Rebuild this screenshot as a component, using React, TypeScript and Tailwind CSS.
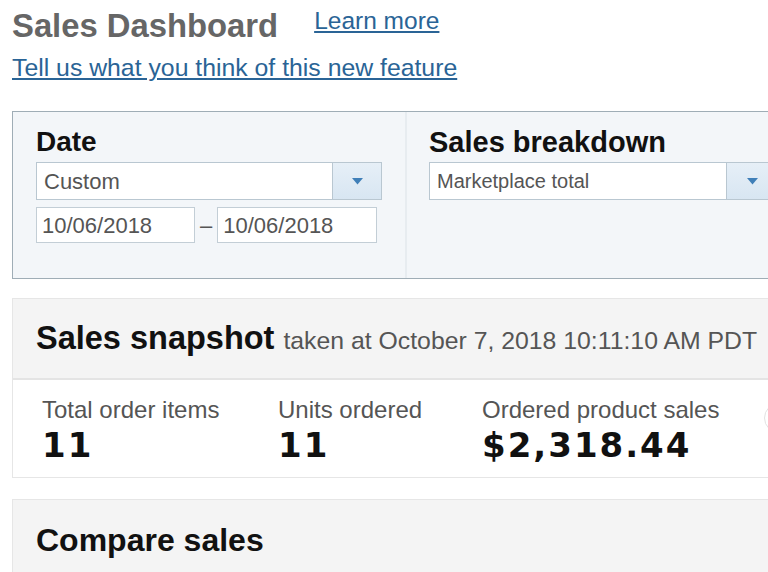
import React from 'react'

const sans = { fontFamily: '"Liberation Sans", Arial, sans-serif' }

function Caret() {
  return (
    <svg width="11" height="7" viewBox="0 0 11 7">
      <path d="M0 0 L11 0 L5.5 6.5 Z" fill="#3f7fb8" />
    </svg>
  )
}

function Select({
  value,
  width,
  arrowWidth,
  textSize,
}: {
  value: string
  width: string
  arrowWidth: string
  textSize: string
}) {
  return (
    <div className={`flex h-[38px] border border-[#b9c7d1] bg-white ${width}`}>
      <div className={`flex flex-1 items-center pl-[7px] text-[#555] ${textSize}`}>{value}</div>
      <div
        className={`flex items-center justify-center border-l border-[#b9c7d1] bg-gradient-to-b from-[#e6eff7] to-[#d8e6f2] ${arrowWidth}`}
      >
        <Caret />
      </div>
    </div>
  )
}

function DateInput({ value, width }: { value: string; width: string }) {
  return (
    <div
      className={`flex h-[36px] items-center border border-[#c3ced6] bg-white pl-[5px] text-[22px] text-[#555] ${width}`}
    >
      {value}
    </div>
  )
}

function Metric({ label, value, width }: { label: string; value: string; width: string }) {
  return (
    <div className={`flex flex-col ${width}`}>
      <div className="whitespace-nowrap text-[24px] leading-[26px] text-[#555]">{label}</div>
      <div
        className="mt-[3px] text-[34px] font-bold leading-[38px] tracking-[2px] text-[#111]"
        style={{ fontFamily: '"DejaVu Sans", Verdana, sans-serif' }}
      >
        {value}
      </div>
    </div>
  )
}

export default function App() {
  return (
    <div className="h-[572px] w-[768px] overflow-hidden bg-white" style={sans}>
      <div className="pl-[12px] pt-[8px]">
        {/* header */}
        <div className="flex items-start">
          <h1 className="text-[32.8px] font-bold leading-[36px] text-[#666]">Sales Dashboard</h1>
          <a className="ml-[36px] mt-[-1px] text-[24.5px] leading-[28px] text-[#2a6496] underline underline-offset-2">
            Learn more
          </a>
        </div>
        <a className="mt-[10px] block text-[24.8px] leading-[28px] text-[#2a6496] underline underline-offset-2">
          Tell us what you think of this new feature
        </a>

        {/* filters */}
        <div className="mt-[29px] flex h-[168px] w-[800px] border border-[#9fadb6] bg-[#f3f6f9]">
          <div className="w-[394px] border-r-2 border-[#e7ecf0] pl-[23px] pt-[14px]">
            <div className="text-[28px] font-bold leading-[32px] text-[#111]">Date</div>
            <div className="mt-[4px]">
              <Select value="Custom" width="w-[346px]" arrowWidth="w-[49px]" textSize="text-[22px]" />
            </div>
            <div className="mt-[7px] flex items-center">
              <DateInput value="10/06/2018" width="w-[159px]" />
              <span className="mx-[5px] text-[22px] text-[#555]">–</span>
              <DateInput value="10/06/2018" width="w-[160px]" />
            </div>
          </div>
          <div className="pl-[22px] pt-[14px]">
            <div className="text-[29px] font-bold leading-[32px] text-[#111]">Sales breakdown</div>
            <div className="mt-[4px]">
              <Select value="Marketplace total" width="w-[350px]" arrowWidth="w-[52px]" textSize="text-[20px]" />
            </div>
          </div>
        </div>

        {/* snapshot */}
        <div className="mt-[19px] w-[800px] border border-[#e6e6e6]">
          <div className="flex h-[81px] items-center whitespace-nowrap border-b-2 border-[#e4e4e4] bg-[#f4f4f4] pl-[23px]">
            <span className="text-[32.5px] font-bold text-[#111]">Sales snapshot</span>
            <span className="ml-[9px] mt-[4px] text-[24.8px] text-[#555]">taken at October 7, 2018 10:11:10 AM PDT</span>
          </div>
          <div className="flex h-[97px] bg-white pl-[29px] pt-[17px]">
            <Metric label="Total order items" value="11" width="w-[236px]" />
            <Metric label="Units ordered" value="11" width="w-[204px]" />
            <Metric label="Ordered product sales" value="$2,318.44" width="w-[282px]" />
            <div className="mt-[6px] h-[30px] w-[30px] shrink-0 rounded-full border border-[#e2e2e2]" />
          </div>
        </div>

        {/* compare */}
        <div className="mt-[21px] h-[80px] w-[800px] border border-[#e6e6e6] bg-[#f4f4f4] pl-[23px] pt-[22px]">
          <div className="text-[32px] font-bold leading-[36px] text-[#111]">Compare sales</div>
        </div>
      </div>
    </div>
  )
}
